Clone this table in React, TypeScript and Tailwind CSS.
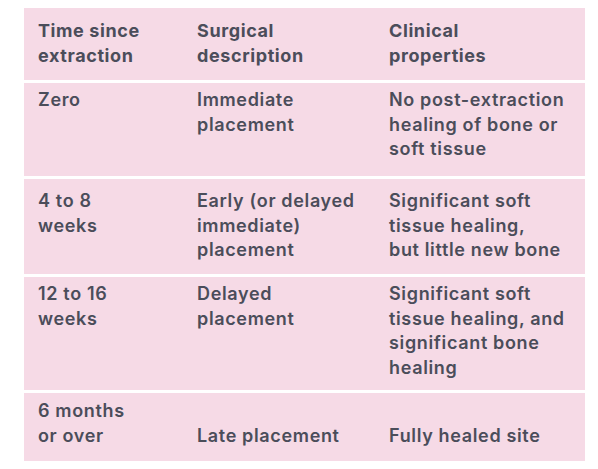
import React from "react";

const rows: { h: string; pt: string; c1: string[]; c2: string[]; c3: string[] }[] = [
  { h: "h-[93px]", pt: "pt-[5px]", c1: ["Zero"], c2: ["Immediate", "placement"], c3: ["No post-extraction", "healing of bone or", "soft tissue"] },
  { h: "h-[95px]", pt: "pt-[10px]", c1: ["4 to 8", "weeks"], c2: ["Early (or delayed", "immediate)", "placement"], c3: ["Significant soft", "tissue healing,", "but little new bone"] },
  { h: "h-[113px]", pt: "pt-[5px]", c1: ["12 to 16", "weeks"], c2: ["Delayed", "placement"], c3: ["Significant soft", "tissue healing, and", "significant bone", "healing"] },
  { h: "h-[68px]", pt: "pt-[6px]", c1: ["6 months", "or over"], c2: ["", "Late placement"], c3: ["", "Fully healed site"] },
];

function Cell({ lines }: { lines: string[] }) {
  return (
    <div className="whitespace-nowrap">
      {lines.map((l, i) => (
        <div key={i} className="h-[24.5px]">{l}</div>
      ))}
    </div>
  );
}

export default function App() {
  return (
    <div
      className="w-[598px] h-[469px] bg-white pt-[8px] pl-[24px] text-[#4b4d5a] text-[18px] leading-[24.5px] tracking-[0.65px]"
      style={{ fontFamily: "Inter, 'Liberation Sans', sans-serif" }}
    >
      <div className="w-[561px] flex flex-col gap-[3px]">
        <div className="h-[72px] bg-[#f6dae6] grid grid-cols-[159px_192px_210px] pl-[14px] pt-[11px] font-bold tracking-[0.6px]">
          <Cell lines={["Time since", "extraction"]} />
          <Cell lines={["Surgical", "description"]} />
          <Cell lines={["Clinical", "properties"]} />
        </div>
        {rows.map((r, i) => (
          <div key={i} className={`${r.h} ${r.pt} bg-[#f6dae6] grid grid-cols-[159px_192px_210px] pl-[14px] font-semibold`}>
            <Cell lines={r.c1} />
            <Cell lines={r.c2} />
            <Cell lines={r.c3} />
          </div>
        ))}
      </div>
    </div>
  );
}
